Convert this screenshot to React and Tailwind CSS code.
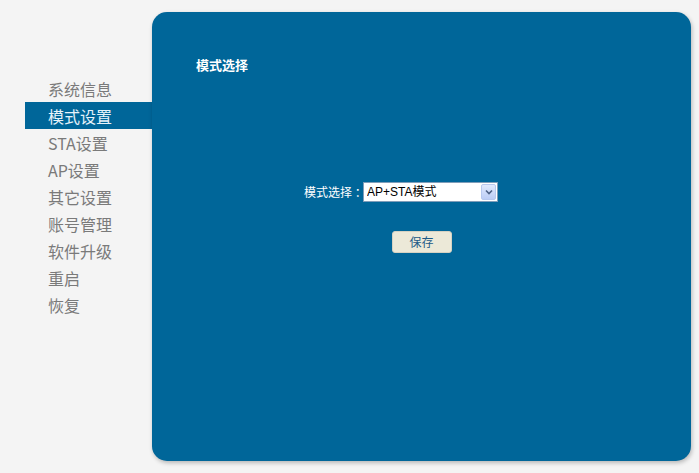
import React, { useState } from 'react';

const MENU = ['系统信息', '模式设置', 'STA设置', 'AP设置', '其它设置', '账号管理', '软件升级', '重启', '恢复'];

export default function App() {
  const [active, setActive] = useState(1);
  const [mode, setMode] = useState('apsta');

  return (
    <div
      className="flex min-h-[473px] w-full bg-[#f4f4f4]"
      style={{ fontFamily: '"Noto Sans CJK SC", "Noto Sans", sans-serif' }}
    >
      {/* 左侧菜单 */}
      <div className="w-[152px] shrink-0 pt-[75px] pl-[25px]">
        {MENU.map((m, i) => (
          <div
            key={m}
            onClick={() => setActive(i)}
            className={
              'flex h-[27px] cursor-pointer items-center pl-[23px] text-[16px] leading-none ' +
              (i === active ? 'bg-[#006699] text-[#e6f2fa]' : 'text-[#7a7a7a]')
            }
          >
            {m}
          </div>
        ))}
      </div>

      {/* 内容面板 */}
      <div className="mt-[12px] mb-[12px] h-[449px] w-[539px] shrink-0 rounded-[15px] bg-[#006699] shadow-[1px_2px_4px_rgba(0,0,0,0.25)]">
        <div className="pt-[43px] pl-[44px] text-[13px] font-bold text-white">模式选择</div>

        <div className="mt-[107px] flex items-center pl-[152px]">
          <span className="w-[59px] shrink-0 whitespace-nowrap text-[12px] text-white">模式选择 ：</span>
          <div className="relative h-[20px] w-[135px] shrink-0 border border-[#7f9db9] bg-white">
            <select
              value={mode}
              onChange={(e) => setMode(e.target.value)}
              className="block h-[18px] w-full appearance-none bg-transparent py-0 pl-[3px] text-[12px] leading-[18px] text-black outline-none"
              style={{ fontFamily: '"Liberation Sans", "Noto Sans CJK SC", sans-serif', lineHeight: '18px' }}
            >
              <option value="ap">AP模式</option>
              <option value="sta">STA模式</option>
              <option value="apsta">AP+STA模式</option>
            </select>
            <div className="pointer-events-none absolute top-[1px] right-[1px] bottom-[1px] flex w-[15px] items-center justify-center rounded-[2px] border border-[#b8c9ef] bg-gradient-to-b from-[#e1eafe] to-[#bccdf5]">
              <svg width="8" height="6" viewBox="0 0 8 6">
                <path d="M1 1.5 L4 4.5 L7 1.5" fill="none" stroke="#4d6185" strokeWidth="1.6" />
              </svg>
            </div>
          </div>
        </div>

        <div className="mt-[29px] flex justify-center">
          <button className="h-[22px] w-[60px] rounded-[3px] border border-[#d6d2c2] bg-[#ece9d8] text-[12px] text-[#1c5a87]">
            保存
          </button>
        </div>
      </div>
    </div>
  );
}
